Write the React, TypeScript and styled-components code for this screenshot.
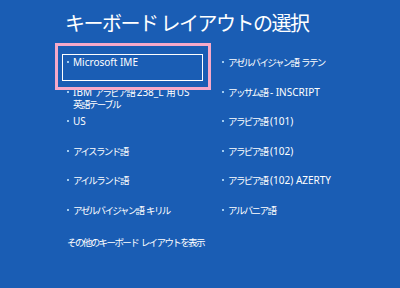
import React from "react";
import styled, { createGlobalStyle } from "styled-components";

const Global = createGlobalStyle`
  html, body { margin: 0; padding: 0; }
  body {
    background: #1a5db4;
    width: 400px;
    height: 288px;
    overflow: hidden;
    font-family: "Noto Sans", "Noto Sans CJK JP", sans-serif;
    color: #ffffff;
  }
`;

const Page = styled.div`
  position: relative;
  width: 400px;
  height: 288px;
  box-sizing: border-box;
  padding: 10px 0 0 62px;
`;

const Title = styled.h1`
  margin: 0 0 0 3px;
  font-family: "Noto Sans CJK JP", sans-serif;
  font-weight: 400;
  font-size: 20px;
  line-height: 26px;
  letter-spacing: -1.5px;
  height: 44px;
  white-space: nowrap;
`;

const Grid = styled.div`
  display: grid;
  grid-template-columns: 141px 141px;
  grid-auto-rows: 27px;
  column-gap: 14px;
  row-gap: 2.5px;
`;

const Item = styled.div<{ $focused?: boolean }>`
  box-sizing: border-box;
  border: 1px solid ${(p) => (p.$focused ? "#ffffff" : "transparent")};
  padding: 1px 0 0 10px;
  position: relative;
  font-size: 10px;
  line-height: 12px;
  white-space: nowrap;
  &::before {
    content: "";
    position: absolute;
    left: 4px;
    top: 6px;
    width: 2px;
    height: 2px;
    background: #9fcaf0;
  }
`;

const Jp = styled.span`
  font-family: "Noto Sans CJK JP", sans-serif;
  font-size: 9.5px;
  letter-spacing: -1.6px;
`;

const Footer = styled.div`
  margin: 7px 0 0 5px;
  font-size: 10px;
  line-height: 12px;
  white-space: nowrap;
`;

const Highlight = styled.div`
  position: absolute;
  left: 55px;
  top: 43px;
  width: 156px;
  height: 47px;
  box-sizing: border-box;
  border: 3px solid #f6a9c9;
  pointer-events: none;
`;

const JP_RE = /[\u3000-\u9fff\uff00-\uffef]/;

function Txt({ s }: { s: string }) {
  const parts = s.match(/[\u3000-\u9fff\uff00-\uffef]+|[^\u3000-\u9fff\uff00-\uffef]+/g) || [];
  return (
    <>
      {parts.map((p, i) =>
        JP_RE.test(p) ? <Jp key={i}>{p}</Jp> : <span key={i}>{p}</span>
      )}
    </>
  );
}

const left = [
  "Microsoft IME",
  "IBM アラビア語 238_L 用 US\n英語テーブル",
  "US",
  "アイスランド語",
  "アイルランド語",
  "アゼルバイジャン語 キリル",
];
const right = [
  "アゼルバイジャン語 ラテン",
  "アッサム語 - INSCRIPT",
  "アラビア語 (101)",
  "アラビア語 (102)",
  "アラビア語 (102) AZERTY",
  "アルバニア語",
];

export default function App() {
  const cells: React.ReactNode[] = [];
  for (let i = 0; i < 6; i++) {
    const lines = left[i].split("\n");
    cells.push(
      <Item key={"l" + i} $focused={i === 0}>
        {lines.map((l, j) => (
          <div key={j}>
            <Txt s={l} />
          </div>
        ))}
      </Item>
    );
    cells.push(
      <Item key={"r" + i}>
        <Txt s={right[i]} />
      </Item>
    );
  }
  return (
    <>
      <Global />
      <Page>
        <Title>キーボード レイアウトの選択</Title>
        <Grid>{cells}</Grid>
        <Footer>
          <Txt s="その他のキーボード レイアウトを表示" />
        </Footer>
        <Highlight />
      </Page>
    </>
  );
}
